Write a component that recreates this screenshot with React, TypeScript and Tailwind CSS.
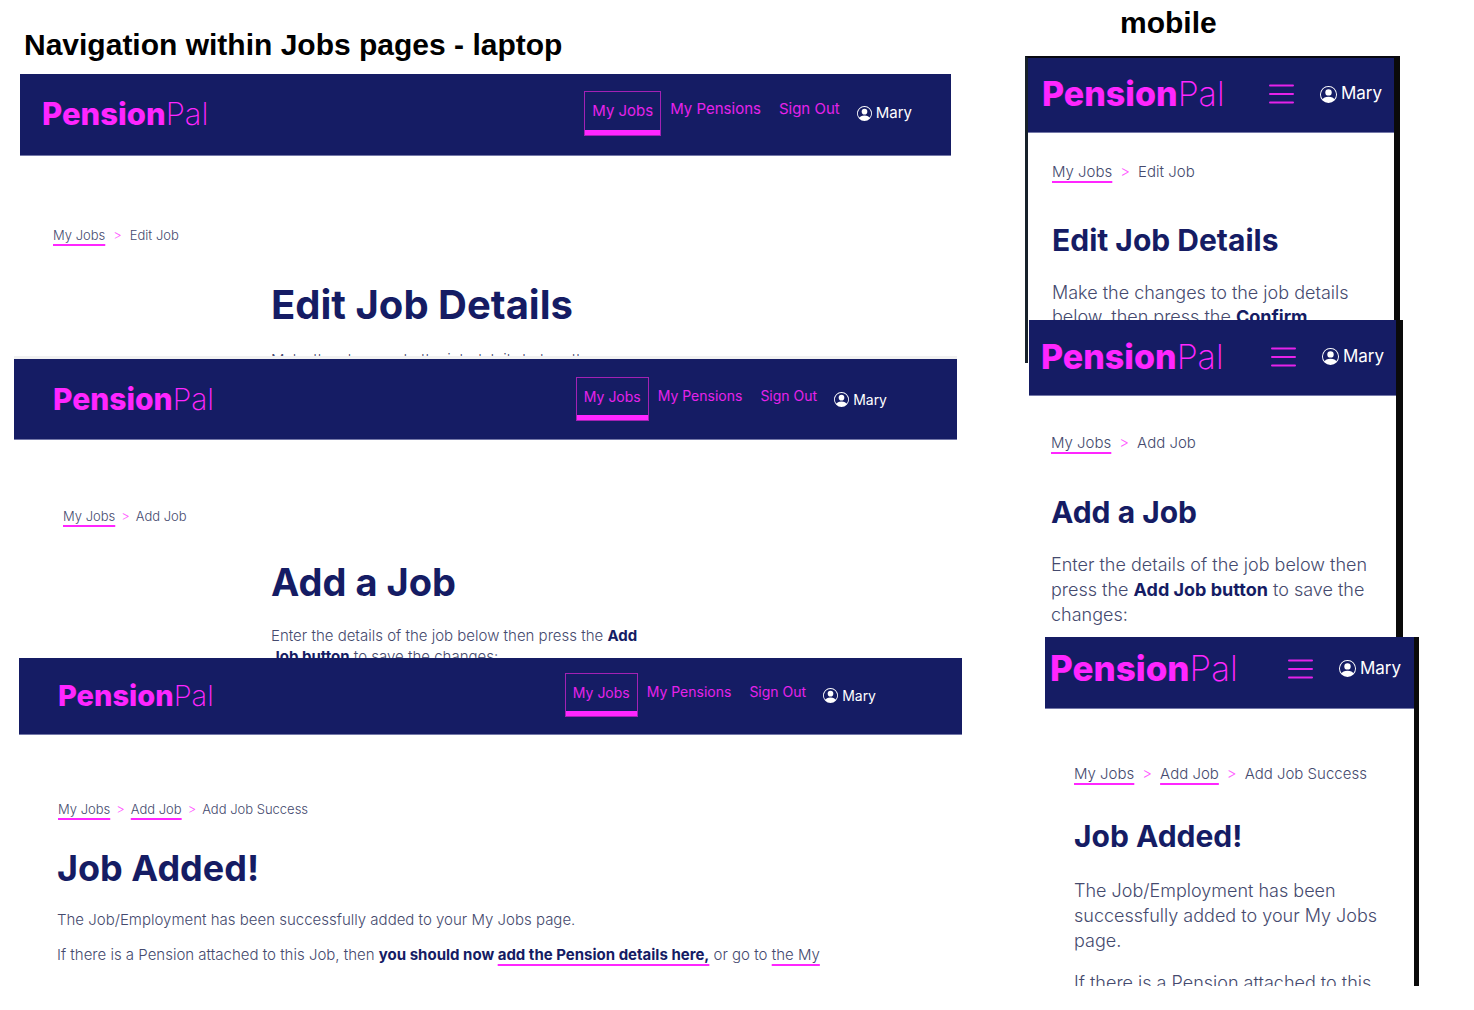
import React from "react";
import { BsPersonCircle } from "react-icons/bs";

type Crumb = { label: string; current?: boolean };

function Logo({ className }: { className: string }) {
  return (
    <a href="#" className={`whitespace-nowrap leading-none text-[#ff26ff] ${className}`}>
      <span className="font-extrabold">Pension</span>
      <span className="font-extralight">Pal</span>
    </a>
  );
}

function User({ className, iconClass }: { className: string; iconClass: string }) {
  return (
    <a href="#" className={`flex items-center text-white ${className}`}>
      <BsPersonCircle className={iconClass} />
      Mary
    </a>
  );
}

function LaptopHeader({ className, logoClass, navClass }: { className: string; logoClass: string; navClass: string }) {
  return (
    <header className={`flex items-center justify-between border-b border-[#7478a8] bg-[#151c64] ${className}`}>
      <Logo className={logoClass} />
      <nav aria-label="Main" className={`flex items-center whitespace-nowrap ${navClass}`}>
        <a href="#" aria-current="page" className="border border-[#a321b4] text-[#e622ea]">
          <span className="block border-b-5 border-[#ff26ff] px-[7px] py-2">My Jobs</span>
        </a>
        <a href="#" className="px-[9px] pb-2 text-[#e622ea]">My Pensions</a>
        <a href="#" className="px-[9px] pb-2 text-[#e622ea]">Sign Out</a>
        <User className="ml-2 gap-1" iconClass="size-[15px]" />
      </nav>
    </header>
  );
}

function MobileHeader({ className, logoClass }: { className: string; logoClass: string }) {
  return (
    <header className={`flex items-center justify-between border-b border-[#7478a8] bg-[#151c64] ${className}`}>
      <Logo className={logoClass} />
      <div className="flex items-center gap-[26px]">
        <button type="button" aria-label="Open menu" className="text-[#e622ea]">
          <svg className="h-5 w-[25px]" viewBox="0 0 25 20" fill="none" stroke="currentColor" strokeWidth="2" strokeLinecap="round">
            <path d="M1 1.5h23M1 10h23M1 18.5h23" />
          </svg>
        </button>
        <User className="gap-1 text-[17px]" iconClass="size-[17px]" />
      </div>
    </header>
  );
}

const linkUnderline =
  "underline decoration-[#ff26ff] decoration-2 underline-offset-4 [text-decoration-skip-ink:none]";

function Breadcrumb({ items, className }: { items: Crumb[]; className: string }) {
  return (
    <nav aria-label="Breadcrumb">
      <ol className={`flex font-light leading-5 text-[#454a6e] ${className}`}>
        {items.map((item, i) => (
          <li key={item.label} className="flex gap-[inherit]">
            {i > 0 && <span className="text-[#ff5cff]">&gt;</span>}
            {item.current ? (
              <span aria-current="page">{item.label}</span>
            ) : (
              <a href="#" className={linkUnderline}>{item.label}</a>
            )}
          </li>
        ))}
      </ol>
    </nav>
  );
}

const editTrail: Crumb[] = [{ label: "My Jobs" }, { label: "Edit Job", current: true }];
const addTrail: Crumb[] = [{ label: "My Jobs" }, { label: "Add Job", current: true }];
const successTrail: Crumb[] = [
  { label: "My Jobs" },
  { label: "Add Job" },
  { label: "Add Job Success", current: true },
];

const bodyText = "font-light text-[#454a6e]";
const strong = "font-bold text-[#151c64]";
const heading = "font-bold text-[#151c64]";

function LaptopColumn() {
  return (
    <section className="flex flex-col">
      <h2 className="mt-[27px] mb-[11px] ml-6 whitespace-nowrap font-['Liberation_Sans',sans-serif] text-[30px] leading-9 font-bold">
        Navigation within Jobs pages - laptop
      </h2>

      <article className="isolate mr-[59px] ml-5 h-[282px] overflow-hidden bg-white">
        <LaptopHeader className="h-[82px] pr-[39px] pb-[2px] pl-[22px]" logoClass="text-[31px]" navClass="text-[15px]" />
        <Breadcrumb items={editTrail} className="mt-[69px] gap-2 pl-[33px] text-[13px]" />
        <div className="mt-9 ml-[251px]">
          <h1 className={`text-[40px] leading-[48px] ${heading}`}>Edit Job Details</h1>
          <p className={`mt-5 text-[15px] leading-[21px] ${bodyText}`}>
            Make the changes to the job details below, then
          </p>
        </div>
      </article>

      <article className="isolate mr-[53px] ml-[14px] h-[302px] overflow-hidden border-t-3 border-[#f1f1f1] bg-white">
        <LaptopHeader className="h-[81px] pr-[70px] pl-[39px]" logoClass="text-[30px]" navClass="text-[14px]" />
        <Breadcrumb items={addTrail} className="mt-[66px] gap-[6px] pl-[49px] text-[13px]" />
        <div className="mt-8 ml-[257px] max-w-[386px]">
          <h1 className={`text-[38px] leading-[48px] ${heading}`}>Add a Job</h1>
          <p className={`mt-[19px] text-[15px] leading-[21px] ${bodyText}`}>
            Enter the details of the job below then press the <b className={strong}>Add Job button</b> to save the
            changes:
          </p>
        </div>
      </article>

      <article className="isolate mr-12 ml-[19px] bg-white">
        <LaptopHeader className="h-[77px] pr-[86px] pb-[2px] pl-[39px]" logoClass="text-[29px]" navClass="text-[14px]" />
        <Breadcrumb items={successTrail} className="mt-16 gap-[6px] pl-[39px] text-[13px]" />
        <div className="mt-[25px] ml-[38px]">
          <h1 className={`text-[36px] leading-[48px] ${heading}`}>Job Added!</h1>
          <p className={`mt-[17px] text-[15px] leading-[21px] ${bodyText}`}>
            The Job/Employment has been successfully added to your My Jobs page.
          </p>
          <p className={`mt-[14px] text-[15px] leading-[21px] whitespace-nowrap ${bodyText}`}>
            If there is a Pension attached to this Job, then{" "}
            <b className={strong}>
              you should now <a href="#" className={linkUnderline}>add the Pension details here,</a>
            </b>{" "}
            or go to <a href="#" className={linkUnderline}>the My</a>
          </p>
        </div>
      </article>
    </section>
  );
}

function MobileColumn() {
  return (
    <section className="flex flex-col">
      <h2 className="mt-[5px] mb-[15px] pl-[110px] font-['Liberation_Sans',sans-serif] text-[30px] leading-9 font-bold">mobile</h2>

      <article className="isolate mr-[74px] ml-[15px] h-[307px] overflow-hidden border-t-2 border-r-6 border-l-3 border-t-[#080810] border-r-[#0a0a0a] border-l-[#17212a] bg-white">
        <MobileHeader className="h-[75px] pr-3 pb-[2px] pl-[14px]" logoClass="text-[34px]" />
        <Breadcrumb items={editTrail} className="mt-[29px] gap-2 pl-6 text-[15px]" />
        <div className="mt-10 ml-6 max-w-[310px]">
          <h1 className={`text-[30px] leading-9 ${heading}`}>Edit Job Details</h1>
          <p className={`mt-[23px] text-[18px] leading-6 ${bodyText}`}>
            Make the changes to the job details below, then press the <b className={strong}>Confirm</b>
          </p>
        </div>
      </article>

      <article className="isolate -mt-[43px] mr-[71px] ml-[19px] h-[317px] overflow-hidden border-r-7 border-[#0a0a0a] bg-white">
        <MobileHeader className="h-[76px] pr-3 pb-[2px] pl-3" logoClass="text-[34px]" />
        <Breadcrumb items={addTrail} className="mt-[37px] gap-2 pl-[22px] text-[15px]" />
        <div className="mt-[41px] ml-[22px] max-w-[325px]">
          <h1 className={`text-[30px] leading-9 ${heading}`}>Add a Job</h1>
          <p className={`mt-[22px] text-[18px] leading-[25px] ${bodyText}`}>
            Enter the details of the job below then press the <b className={strong}>Add Job button</b> to save the
            changes:
          </p>
        </div>
      </article>

      <article className="isolate mr-[55px] ml-[35px] h-[349px] overflow-hidden border-r-5 border-[#0a0a0a] bg-white">
        <MobileHeader className="h-[72px] pr-[13px] pb-2 pl-[5px]" logoClass="text-[35px]" />
        <Breadcrumb items={successTrail} className="mt-[55px] gap-2 pl-[29px] text-[15px]" />
        <div className="mt-[34px] ml-[29px] max-w-[315px]">
          <h1 className={`text-[30px] leading-9 ${heading}`}>Job Added!</h1>
          <p className={`mt-6 text-[18px] leading-[25px] ${bodyText}`}>
            The Job/Employment has been successfully added to your My Jobs page.
          </p>
          <p className={`mt-[17px] text-[18px] leading-[25px] ${bodyText}`}>If there is a Pension attached to this</p>
        </div>
      </article>
    </section>
  );
}

export default function App() {
  return (
    <main className="grid min-h-screen grid-cols-[1010fr_464fr] items-start bg-white font-['Inter',sans-serif] text-black">
      <LaptopColumn />
      <MobileColumn />
    </main>
  );
}
